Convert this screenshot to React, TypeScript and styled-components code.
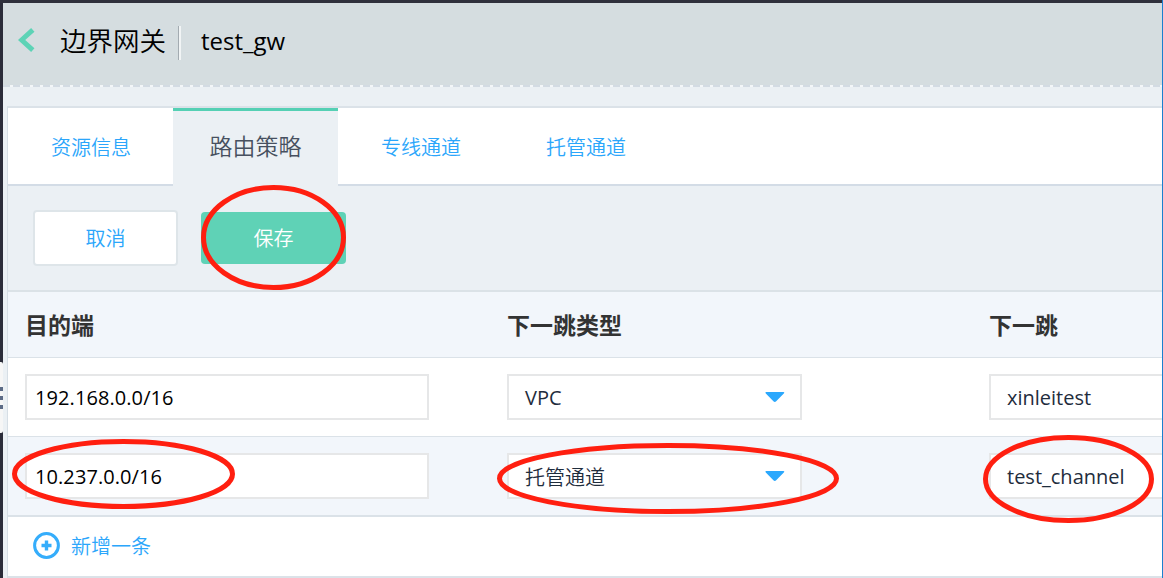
import React from "react";
import styled, { createGlobalStyle, css } from "styled-components";

const Global = createGlobalStyle`
  *, *::before, *::after { box-sizing: border-box; }
  body {
    margin: 0;
    overflow: hidden;
    font-family: "Open Sans", "Noto Sans CJK SC", sans-serif;
    font-size: 20px;
    color: #1f2d3d;
  }
`;

const Frame = styled.div`
  position: relative;
  display: grid;
  grid-template-columns: 3px minmax(0, 1fr) 1px;
  grid-template-rows: 3px minmax(0, 1fr);
  width: 1163px;
  height: 578px;
  overflow: hidden;
  background: #2b2c39;
`;

const TopStrip = styled.div`
  grid-column: 1 / 3;
  background: #2f303c;
`;

const WindowEdge = styled.div`
  grid-column: 3;
  grid-row: 1 / 3;
  background: #1b80cf;
`;

const Rail = styled.div`
  grid-column: 1;
  grid-row: 2;
  padding-top: 359px;
`;

const Handle = styled.div`
  display: flex;
  flex-direction: column;
  justify-content: center;
  gap: 5px;
  height: 71px;
  padding-top: 1px;
  background: #f6f6f6;
  border-radius: 0 2px 2px 0;
`;

const Grip = styled.span`
  height: 4px;
  background: #5c6b86;
`;

const Page = styled.main`
  grid-column: 2;
  grid-row: 2;
  display: flex;
  flex-direction: column;
  overflow: hidden;
  background: #ebf0f4;
`;

const Header = styled.header`
  display: flex;
  align-items: center;
  height: 82px;
  padding: 0 0 6px 15px;
  background: #d5dde0;
  color: #000;
`;

const BackIcon = styled.svg`
  width: 18px;
  height: 26px;
  margin: 0 24px 2px 0;
`;

const Title = styled.h1`
  margin: 0;
  font-size: 26.5px;
  font-weight: 350;
  line-height: 36px;
`;

const Divider = styled.span`
  width: 3px;
  height: 34px;
  margin: 4px 20px 0 12px;
  border-left: 1px solid #a3abb1;
  border-right: 2px solid #f1f4f5;
`;

const Subtitle = styled.span`
  font-size: 24px;
  line-height: 36px;
`;

const Dashes = styled.div`
  height: 2px;
  background: repeating-linear-gradient(90deg, #d3dbe3 0 7px, #f3f6f8 7px 10px);
`;

const Panel = styled.section`
  display: flex;
  flex-direction: column;
  flex: 1;
  margin: 19px 0 0 4px;
  border-top: 2px solid #dbe2e8;
  border-left: 1px solid #d6dee5;
`;

const Tabs = styled.nav`
  display: flex;
  height: 78px;
`;

const Tab = styled.a<{ $active?: boolean }>`
  display: flex;
  align-items: center;
  justify-content: center;
  width: 165px;
  padding-left: 1px;
  background: #fff;
  border-bottom: 2px solid #d3dce6;
  color: #2ba6fb;
  font-weight: 350;
  ${(p) =>
    p.$active &&
    css`
      padding: 0 0 7px;
      background: #ebf0f4;
      border-top: 3px solid #55d0b4;
      border-bottom: 0;
      color: #475060;
      font-size: 23px;
    `}
`;

const TabFill = styled.div`
  flex: 1;
  background: #fff;
  border-bottom: 2px solid #d3dce6;
`;

const Toolbar = styled.div`
  display: flex;
  align-items: center;
  gap: 23px;
  height: 104px;
  padding-left: 25px;
`;

const Button = styled.button<{ $primary?: boolean }>`
  width: 145px;
  height: ${(p) => (p.$primary ? 52 : 56)}px;
  padding: 0 0 2px;
  border: ${(p) => (p.$primary ? "0" : "2px solid #dee5e9")};
  border-radius: 4px;
  background: ${(p) => (p.$primary ? "#5fd2b6" : "#fff")};
  color: ${(p) => (p.$primary ? "#fff" : "#2ba6fb")};
  font: inherit;
  font-weight: 350;
`;

const Row = styled.div<{ $tint?: boolean }>`
  display: grid;
  grid-template-columns: 482px 482px minmax(0, 1fr);
  align-items: center;
  height: 79px;
  padding-left: 17px;
  border-bottom: 1px solid #dbe2e8;
  background: ${(p) => (p.$tint ? "#f2f6fb" : "#fff")};
`;

const HeadRow = styled(Row)`
  height: 68px;
  padding-bottom: 2px;
  border-top: 2px solid #dbe2e7;
  color: #333;
  font-size: 23px;
  font-weight: 700;
`;

const Field = styled.div<{ $width: number; $select?: boolean }>`
  display: flex;
  align-items: center;
  justify-content: space-between;
  width: ${(p) => p.$width}px;
  height: 46px;
  padding: 0 15px 0 ${(p) => (p.$select ? 16 : 8)}px;
  border: 2px solid #e6e7e8;
  background: #fff;
  color: ${(p) => (p.$select ? "#1f2d3d" : "#000")};
  font-weight: ${(p) => (p.$select ? 350 : 400)};
  letter-spacing: ${(p) => (p.$select ? "0" : "0.08px")};
  white-space: nowrap;
`;

const Latin = styled.span`
  font-weight: 400;
`;

const Caret = styled.svg`
  width: 20px;
  height: 10px;
`;

const AddRow = styled.div`
  display: flex;
  align-items: center;
  gap: 11px;
  height: 62px;
  padding: 0 0 2px 25px;
  border-top: 1px solid #dbe2e8;
  border-bottom: 2px solid #dbe2e8;
  background: #fff;
  color: #2ba6fb;
  font-weight: 350;
`;

const Marks = styled.svg`
  position: absolute;
  inset: 0;
  width: 1163px;
  height: 578px;
  pointer-events: none;
`;

const Arrow = () => (
  <Caret viewBox="0 0 20 10">
    <path d="M1.2 0H18.4Q20 .4 18.8 1.4L11.2 9.2Q9.8 10.6 8.4 9.2L.8 1.4Q-.2 .3 1.2 0Z" fill="#2ba8fd" />
  </Caret>
);

const routes = [
  { target: "192.168.0.0/16", type: <Latin>VPC</Latin>, hop: "xinleitest" },
  { target: "10.237.0.0/16", type: <span>托管通道</span>, hop: "test_channel" },
];

const circles = [
  { cx: 273.5, cy: 237.5, rx: 70, ry: 50 },
  { cx: 123.5, cy: 474, rx: 109, ry: 32.5 },
  { cx: 668, cy: 478.5, rx: 168.5, ry: 33 },
  { cx: 1068.5, cy: 479, rx: 83, ry: 41.5 },
];

export default function App() {
  return (
    <Frame>
      <Global />
      <TopStrip />
      <WindowEdge />
      <Rail>
        <Handle>
          <Grip />
          <Grip />
          <Grip />
        </Handle>
      </Rail>
      <Page>
        <Header>
          <BackIcon viewBox="0 0 18 26">
            <path d="M14.8 2.9L3.6 13L14.8 23.1" fill="none" stroke="#5dd3b6" strokeWidth="5" />
          </BackIcon>
          <Title>边界网关</Title>
          <Divider />
          <Subtitle>test_gw</Subtitle>
        </Header>
        <Dashes />
        <Panel>
          <Tabs>
            <Tab>资源信息</Tab>
            <Tab $active>路由策略</Tab>
            <Tab>专线通道</Tab>
            <Tab>托管通道</Tab>
            <TabFill />
          </Tabs>
          <Toolbar>
            <Button>取消</Button>
            <Button $primary>保存</Button>
          </Toolbar>
          <HeadRow $tint>
            <span>目的端</span>
            <span>下一跳类型</span>
            <span>下一跳</span>
          </HeadRow>
          {routes.map((r, i) => (
            <Row key={r.target} $tint={i % 2 === 1}>
              <Field $width={404}>{r.target}</Field>
              <Field $width={295} $select>
                {r.type}
                <Arrow />
              </Field>
              <Field $width={295} $select>
                <Latin>{r.hop}</Latin>
              </Field>
            </Row>
          ))}
          <AddRow>
            <svg width="27" height="27" viewBox="0 0 27 27" fill="none" stroke="#35adfb">
              <circle cx="13.5" cy="13.5" r="11.9" strokeWidth="3" />
              <path d="M8.5 13.5H18.5M13.5 8.5V18.5" strokeWidth="3.4" />
            </svg>
            <span>新增一条</span>
          </AddRow>
        </Panel>
      </Page>
      <Marks viewBox="0 0 1163 578" fill="none" stroke="#ff1f10" strokeWidth="5">
        {circles.map((c) => (
          <ellipse key={c.cx} {...c} />
        ))}
      </Marks>
    </Frame>
  );
}
